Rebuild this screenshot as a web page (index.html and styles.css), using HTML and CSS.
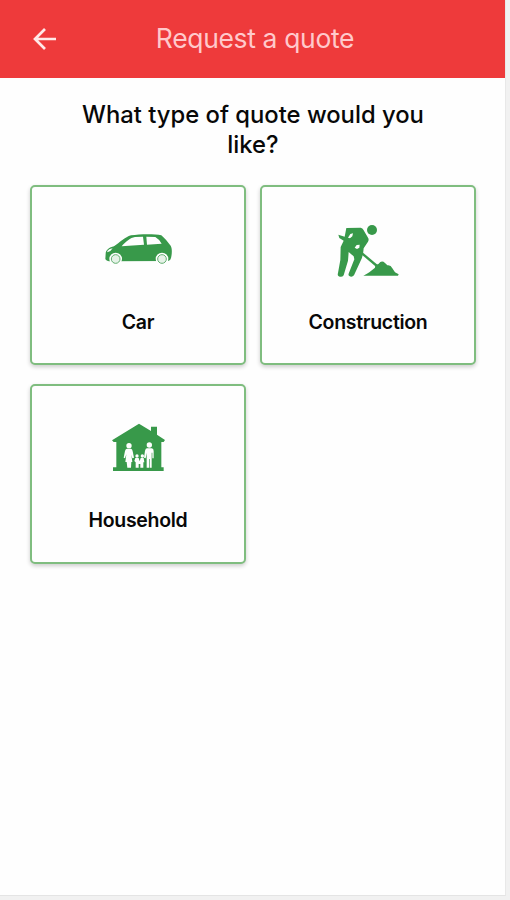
FILE: index.html
```
<!DOCTYPE html>
<html lang="en">
<head>
  <meta charset="UTF-8">
  <title>Request a quote</title>
  <link rel="stylesheet" href="styles.css">
</head>
<body>
  <div class="screen">
    <header class="header">
      <button class="back" aria-label="Back">
        <svg width="24" height="24" viewBox="0 0 24 24">
          <path d="M12 2 L2 12 L12 22 M2 12 H23"/>
        </svg>
      </button>
      <h1>Request a quote</h1>
    </header>

    <main>
      <h2>What type of quote would you like?</h2>

      <div class="cards">
        <a class="card">
          <svg class="icon" viewBox="0 0 270 180">
            <g transform="translate(6 2)">
              <path fill-rule="evenodd" d="M32 99 C32 88 43 80 57 77 C74 66 90 49 108 44 C134 40 178 39 199 44 C208 51 219 65 227 75 C232 83 231 101 228 112 Q227 119 219 121 L48 122 Q34 122 31 115 Z M80 77 C92 63 106 51 120 49 L144 48 L147 72 Z M154 48 L181 49 Q193 56 200 69 L156 72 Z"/>
              <circle class="tyre" cx="62" cy="115" r="19"/>
              <circle class="wheel" cx="62" cy="115" r="13"/>
              <circle class="tyre" cx="201" cy="115" r="19"/>
              <circle class="wheel" cx="201" cy="115" r="13"/>
              <path class="lamp" d="M37 91 Q43 84 53 83 Q49 91 37 95 Z"/>
            </g>
          </svg>
          <span class="card-name">Car</span>
        </a>

        <a class="card">
          <svg class="icon" viewBox="0 0 270 180">
            <g transform="translate(5 -13)">
              <circle cx="142" cy="43" r="15"/>
              <path fill-rule="evenodd" d="M65 37 L108 36 Q114 37 116 42 L131 68 Q133 73 130 78 L117 98 Q115 124 108 135 L88 179 Q81 187 73 180 Q70 177 73 171 L89 131 L87 122 L72 109 L70 135 L57 179 Q51 187 41 181 Q38 178 40 172 L47 133 L48 94 L57 75 L44 67 L41 57 L60 63 Z M70 66 L77 55 L85 53 L83 62 L76 68 Z M90 96 L96 88 L105 87 L104 96 L97 100 Z"/>
              <path class="handle" d="M106 108 L157 151"/>
              <path d="M116 180 Q126 175 134 170 L151 156 L152 149 Q162 147 167 139 Q174 135 181 142 L188 149 Q198 147 203 158 L211 170 L222 176 L220 180 Z"/>
            </g>
          </svg>
          <span class="card-name">Construction</span>
        </a>

        <a class="card household">
          <svg class="icon" viewBox="0 0 270 180">
            <g transform="translate(20 -12)">
              <path d="M37 76 L118 26 L154 48 V35 H172 V59 L196 75 L192 81 H185 V157 H192 V168 H40 V157 H50 V81 H42 Z"/>
              <g class="family">
                <circle cx="88" cy="92" r="8"/>
                <path d="M82 101 H94 Q98 102 99 109 L103 128 L98 130 L95 119 L98 141 H95 L94 158 H83 L81 141 H77 L80 118 L76 130 L72 128 L76 108 Q78 101 82 101 Z"/>
                <circle cx="149" cy="90" r="8"/>
                <path d="M142 100 H156 Q162 101 162 108 V130 H158 V113 H156 V158 H150 V132 H148 V158 H141 V113 L138 130 L133 128 L136 107 Q138 100 142 100 Z"/>
                <circle cx="112" cy="123" r="5"/>
                <path d="M107 129 H117 L120 139 L123 129 H132 L134 142 H131 V158 H122 V147 H117 V158 H108 V142 L104 138 Z"/>
                <circle cx="128" cy="123" r="5"/>
              </g>
            </g>
          </svg>
          <span class="card-name">Household</span>
        </a>
      </div>
    </main>
  </div>
</body>
</html>
```

FILE: styles.css
```
* {
  box-sizing: border-box;
}
body {
  margin: 0;
  background-color: #f1f1f1;
  font-family: Inter, sans-serif;
  color: #080808;
}
.screen {
  width: 506px;
  height: 896px;
  background-color: #fefefe;
  border-right: 1px solid #e8e8e8;
  border-bottom: 1px solid #e4e4e4;
}
.header {
  display: grid;
  grid-template-columns: 60px 1fr 60px;
  align-items: center;
  height: 78px;
  background-color: #ee3a3b;
}
.header h1 {
  margin: 0;
  padding: 0 0 2px 5px;
  font-size: 26.5px;
  font-weight: 400;
  line-height: 32px;
  letter-spacing: -0.35px;
  text-align: center;
  color: #ffc9cb;
}
.back {
  display: flex;
  padding: 0 0 0 33px;
  border: none;
  background: none;
}
.back svg {
  fill: none;
  stroke: #ffe9e8;
  stroke-width: 2.7;
}
main {
  padding: 22px 29px 0 30px;
}
h2 {
  width: 360px;
  margin: 0 auto 26px;
  font-size: 23.8px;
  font-weight: 500;
  line-height: 29.5px;
  text-align: center;
}
.cards {
  display: grid;
  grid-template-columns: 216px 216px;
  gap: 19px 14px;
}
.card {
  display: flex;
  flex-direction: column;
  align-items: center;
  height: 180px;
  padding-top: 33px;
  border: 2px solid #7fbd7f;
  border-radius: 5px;
  background-color: #fefefe;
  box-shadow: 0 2px 4px rgba(0, 0, 0, 0.2);
}
.icon {
  width: 90px;
  height: 60px;
  overflow: visible;
  fill: #38994a;
}
.tyre,
.lamp,
.family {
  fill: #fefefe;
}
.wheel {
  fill: #e6f2e8;
  stroke: #62af70;
  stroke-width: 3;
}
.handle {
  stroke: #38994a;
  stroke-width: 7;
}
.card-name {
  margin-top: 30px;
  font-size: 19.5px;
  font-weight: 600;
  line-height: 24px;
  letter-spacing: -0.3px;
}
.household .card-name {
  margin-top: 29px;
}
```
